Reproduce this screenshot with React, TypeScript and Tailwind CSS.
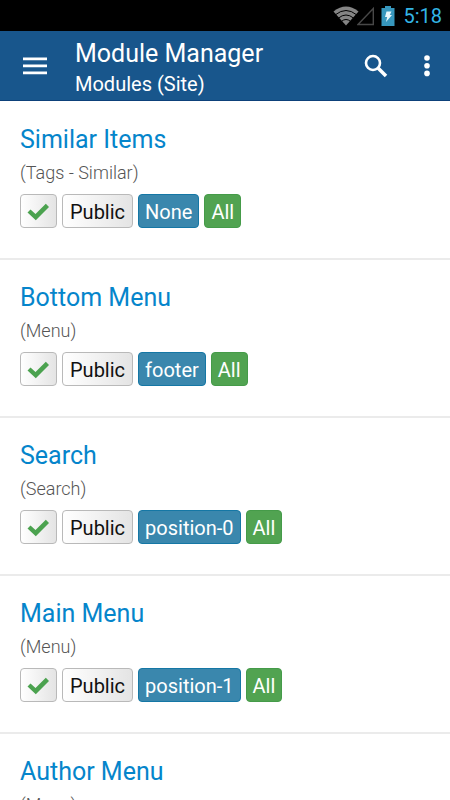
import { clsx } from 'clsx'

interface Module {
  title: string
  type: string
  access: string
  position: string
  pages: string
}

const modules: Module[] = [
  { title: 'Similar Items', type: 'Tags - Similar', access: 'Public', position: 'None', pages: 'All' },
  { title: 'Bottom Menu', type: 'Menu', access: 'Public', position: 'footer', pages: 'All' },
  { title: 'Search', type: 'Search', access: 'Public', position: 'position-0', pages: 'All' },
  { title: 'Main Menu', type: 'Menu', access: 'Public', position: 'position-1', pages: 'All' },
  { title: 'Author Menu', type: 'Menu', access: 'Public', position: 'position-1', pages: 'All' },
]

const badge = 'flex h-[34px] items-center rounded-[4px] border pt-px text-[20px] leading-6'
const light = 'border-[#b9b9b9] bg-linear-to-r from-white to-[#e4e4e4] text-[#111111]'

function StatusBar() {
  return (
    <div className="flex h-[31px] shrink-0 items-center justify-end bg-black pr-2">
      <svg width="26" height="20" viewBox="0 0 26 20" aria-hidden="true">
        <path d="M0.5 5.5Q13 -4.5 25.500 5.500L13 19.500Z" fill="#858585" />
        <g fill="none" stroke="#000" strokeWidth="1">
          <path d="M2.500 8.700Q13 0.300 23.500 8.700" />
          <path d="M5.500 12Q13 6 20.500 12" />
          <path d="M8.500 15.300Q13 11.700 17.500 15.300" />
        </g>
      </svg>
      <svg className="-ml-0.5" width="18" height="20" viewBox="0 0 18 20" aria-hidden="true">
        <path d="M1 18.500H16.300V2.500Z" fill="none" stroke="#484848" strokeWidth="1.400" />
      </svg>
      <svg className="ml-1.5" width="14" height="20" viewBox="0 0 14 20" aria-hidden="true">
        <path d="M4 0h6v2h3.500v18H0.500V2H4Z" fill="#3797bd" />
        <path d="M5.500 5.500h5L8.800 9h2.200L5 16l1.200-5H4Z" fill="#e8f7fc" />
      </svg>
      <span className="ml-2 text-[20px] leading-6 text-[#33b5e5]">5:18</span>
    </div>
  )
}

function Header() {
  return (
    <header className="flex h-[70px] shrink-0 items-center border-b border-[#0d417a] bg-[#18568c] text-white">
      <button aria-label="Open menu" className="flex w-[75px] items-center pl-[23px]">
        <svg width="24" height="18" viewBox="0 0 24 18" fill="currentColor" aria-hidden="true">
          <path d="M0 0.500h24v2.800H0zM0 7.500h24v2.800H0zM0 14.500h24v2.800H0z" />
        </svg>
      </button>
      <div className="min-w-0 flex-1 pt-1">
        <h1 className="truncate text-[25px] leading-8">Module Manager</h1>
        <p className="truncate text-[20px] leading-7">Modules (Site)</p>
      </div>
      <button aria-label="Search" className="flex p-2">
        <svg width="24" height="24" viewBox="0 0 24 24" fill="none" stroke="currentColor" aria-hidden="true">
          <circle cx="9" cy="9" r="7" strokeWidth="2.600" />
          <path d="M14 14l8 8" strokeWidth="3.600" />
        </svg>
      </button>
      <button aria-label="More options" className="ml-5 mr-3 flex p-2">
        <svg width="6" height="22" viewBox="0 0 6 22" fill="currentColor" aria-hidden="true">
          <circle cx="3" cy="3" r="2.800" />
          <circle cx="3" cy="10.700" r="2.800" />
          <circle cx="3" cy="18.400" r="2.800" />
        </svg>
      </button>
    </header>
  )
}

function ModuleRow({ title, type, access, position, pages }: Module) {
  return (
    <li className="h-[158px] border-b-2 border-[#ebebeb] px-5 pt-[22px]">
      <h2 className="text-[25px] leading-8 text-[#0585cb]">
        <a href="#">{title}</a>
      </h2>
      <p className="mt-[3px] text-[18px] font-light leading-7 text-[#555555]">({type})</p>
      <div className="mt-[7px] flex gap-[5px]">
        <button aria-label={`Unpublish ${title}`} className={clsx(badge, light, 'px-1.5')}>
          <svg width="23" height="18" viewBox="0 0 23 18" aria-hidden="true">
            <path d="M0.500 9.500L3.500 6.500L8.500 11L18.800 0.800L22 4L8.800 17.200Z" fill="#4ba24f" />
          </svg>
        </button>
        <span className={clsx(badge, light, 'px-[7px]')}>{access}</span>
        <span className={clsx(badge, 'border-[#1577a5] bg-[#3a87ad] px-1.5 text-white')}>{position}</span>
        <span className={clsx(badge, 'border-[#459b49] bg-[#51a351] px-1.5 text-white')}>{pages}</span>
      </div>
    </li>
  )
}

export default function App() {
  return (
    <div className="flex h-screen flex-col overflow-hidden bg-white font-['Roboto',sans-serif]">
      <StatusBar />
      <Header />
      <main className="min-h-0 flex-1 overflow-y-auto pt-px [scrollbar-width:none]">
        <ul>
          {modules.map(m => (
            <ModuleRow key={m.title} {...m} />
          ))}
        </ul>
      </main>
    </div>
  )
}
